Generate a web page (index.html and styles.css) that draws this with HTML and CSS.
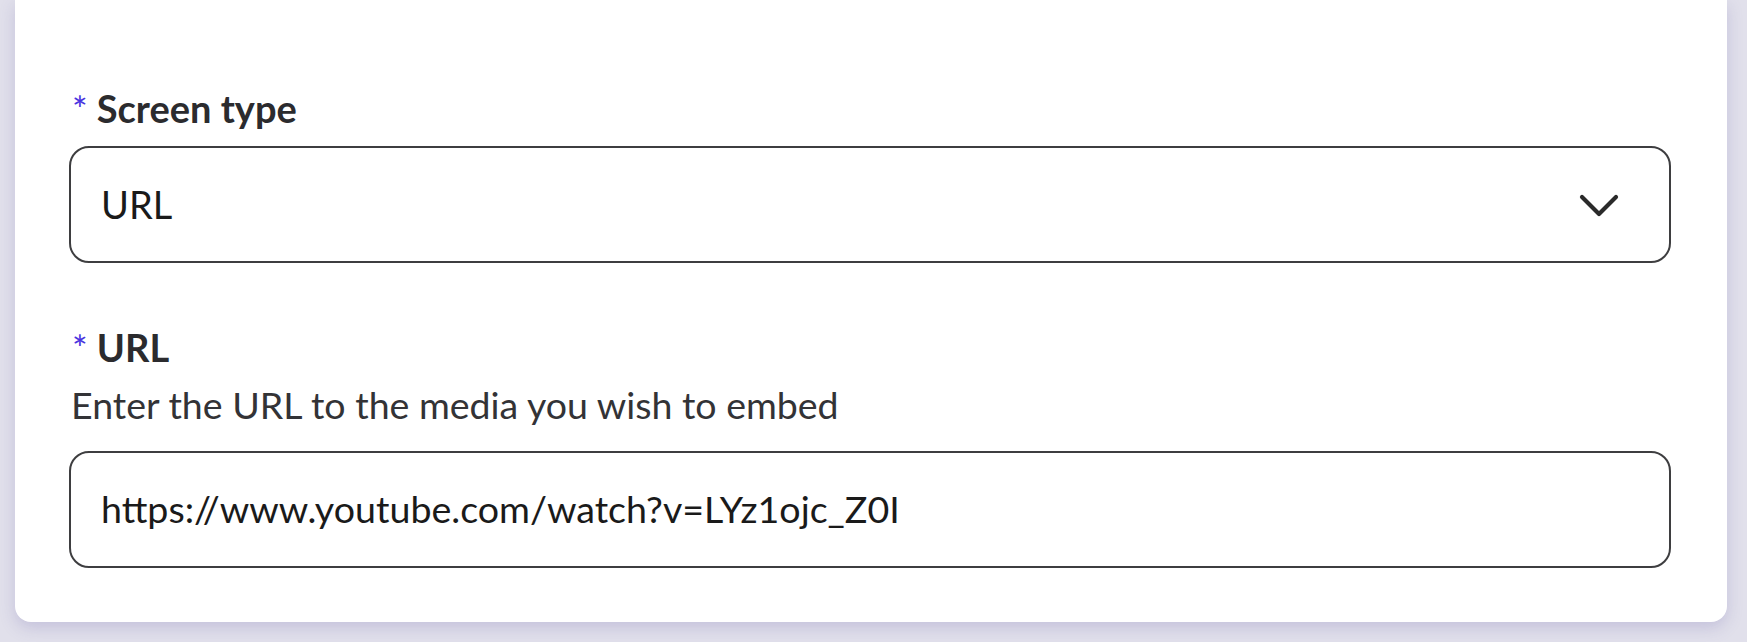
FILE: index.html
```html
<!DOCTYPE html>
<html lang="en">
<head>
<meta charset="utf-8">
<title>Screen form</title>
<link rel="stylesheet" href="styles.css">
</head>
<body>
<div class="page">
  <form class="card">
    <div class="field">
      <label class="label"><span class="req">*</span>Screen type</label>
      <div class="control select">
        <span class="value">URL</span>
        <svg class="chevron" width="42" height="28" viewBox="0 0 42 28" aria-hidden="true">
          <path d="M4 5 L21 22 L38 5" fill="none" stroke="#2a2a2a" stroke-width="4.2" stroke-linecap="round" stroke-linejoin="round"/>
        </svg>
      </div>
    </div>
    <div class="field second">
      <label class="label"><span class="req">*</span>URL</label>
      <div class="help">Enter the URL to the media you wish to embed</div>
      <div class="control input">
        <span class="value">https://www.youtube.com/watch?v=LYz1ojc_Z0I</span>
      </div>
    </div>
  </form>
</div>
</body>
</html>
```

FILE: styles.css
```css
* { box-sizing: border-box; }
html, body { margin: 0; padding: 0; }
body {
  background: #e1e0eb;
  font-family: Lato, "Noto Sans", sans-serif;
  width: 1747px;
  height: 642px;
  overflow: hidden;
}
.page {
  padding: 0 20px 0 15px;
}
.card {
  width: 1712px;
  background: #ffffff;
  border-radius: 0 0 16px 16px;
  box-shadow: 0 6px 16px rgba(95, 88, 165, 0.22);
  padding: 86px 56px 54px 54px;
  display: flex;
  flex-direction: column;
}
.field {
  display: flex;
  flex-direction: column;
}
.field.second { margin-top: 62px; }
.label {
  font-size: 38px;
  font-weight: 700;
  line-height: 1.2;
  color: #2b2b2e;
  display: flex;
  align-items: flex-start;
}
.req {
  color: #4a34e0;
  font-size: 37px;
  font-weight: 400;
  line-height: 1.25;
  margin-left: 3px;
  margin-right: 9px;
}
.help {
  margin-top: 10px;
  padding-left: 2px;
  font-size: 37.5px;
  line-height: 1.2;
  color: #333336;
}
.control {
  height: 117px;
  border: 2px solid #3e3e40;
  border-radius: 20px;
  display: flex;
  align-items: center;
  padding: 0 49px 0 30px;
  background: #fff;
}
.select { margin-top: 14px; justify-content: space-between; }
.input { margin-top: 24px; }
.value {
  font-size: 38px;
  line-height: 1.2;
  color: #1a1a1a;
}
.input .value { font-size: 37.6px; }
.chevron { display: block; margin-top: 3px; }
```
